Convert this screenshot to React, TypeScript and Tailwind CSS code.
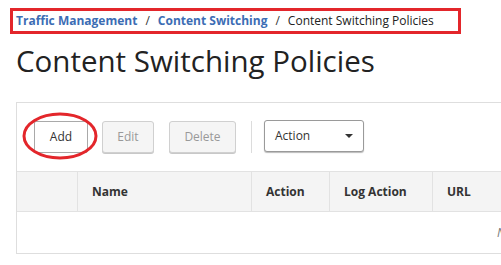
import React from "react";

const font = { fontFamily: '"Open Sans", "Noto Sans", sans-serif' };

const columns = [
  { label: "", width: "w-[61px]" },
  { label: "Name", width: "w-[174px]" },
  { label: "Action", width: "w-[78px]" },
  { label: "Log Action", width: "w-[103px]" },
  { label: "URL", width: "w-[120px]" },
];

const App = () => {
  return (
    <div className="w-[501px] h-[265px] overflow-hidden bg-white text-[#222]" style={font}>
      {/* Breadcrumb */}
      <div className="ml-[10px] mt-[8px] w-[451px] h-[26px] border-[3px] border-[#e3262b] flex items-center pl-[3px] pb-[1px] text-[12px]">
        <span className="font-bold text-[#3c6db4]">Traffic Management</span>
        <span className="mx-[8px] text-[#333]">/</span>
        <span className="font-bold text-[#3c6db4]">Content Switching</span>
        <span className="mx-[8px] text-[#333]">/</span>
        <span className="text-[#222]">Content Switching Policies</span>
      </div>

      {/* Title */}
      <h1 className="ml-[16px] mt-[7px] h-[40px] leading-[40px] text-[29.5px] font-normal text-[#222]">
        Content Switching Policies
      </h1>

      {/* Panel */}
      <div className="ml-[16px] mt-[21px] w-[560px] border border-[#dedede]">
        <div className="h-[68px] flex items-start pt-[18px] pl-[17px]">
          <div className="relative">
            <button className="w-[54px] h-[32px] bg-white border border-[#a9a9a9] rounded-[2px] text-[12px] text-[#333]">
              Add
            </button>
            <svg
              className="absolute left-[-13px] top-[-9px] pointer-events-none"
              width="78"
              height="50"
              viewBox="0 0 78 50"
            >
              <ellipse cx="39" cy="24" rx="36" ry="22" fill="none" stroke="#e3262b" strokeWidth="3" />
            </svg>
          </div>
          <button className="ml-[14px] w-[52px] h-[32px] bg-[#f5f5f5] border border-[#d0d0d0] rounded-[3px] text-[12px] text-[#999] shadow-[0_1px_0_#c8c8c8]">
            Edit
          </button>
          <button className="ml-[15px] w-[67px] h-[32px] bg-[#f5f5f5] border border-[#d0d0d0] rounded-[3px] text-[12px] text-[#999] shadow-[0_1px_0_#c8c8c8]">
            Delete
          </button>
          <div className="ml-[15px] w-px h-[32px] bg-[#dcdcdc]" />
          <div className="ml-[12px] -mt-px w-[100px] h-[32px] bg-white border border-[#9a9a9a] rounded-[3px] shadow-[0_1px_1px_#bbb] flex items-center justify-between pl-[10px] pr-[10px] text-[12px] text-[#333]">
            <span>Action</span>
            <svg width="8" height="4" viewBox="0 0 8 4">
              <path d="M0 0 L8 0 L4 4 Z" fill="#333" />
            </svg>
          </div>
        </div>

        {/* Table header */}
        <div className="flex h-[41px] bg-[#f4f4f4] border-t border-b border-[#e2e2e2]">
          {columns.map((col, i) => (
            <div
              key={i}
              className={`${col.width} shrink-0 h-full flex items-center pl-[14px] text-[12px] font-bold text-[#333] ${
                i < columns.length - 1 ? "border-r border-[#e2e2e2]" : ""
              }`}
            >
              {col.label}
            </div>
          ))}
        </div>

        {/* Empty row */}
        <div className="h-[41px] flex items-center pl-[480px] text-[12px] italic text-[#777]">
          No items
        </div>
      </div>
    </div>
  );
};

export default App;
